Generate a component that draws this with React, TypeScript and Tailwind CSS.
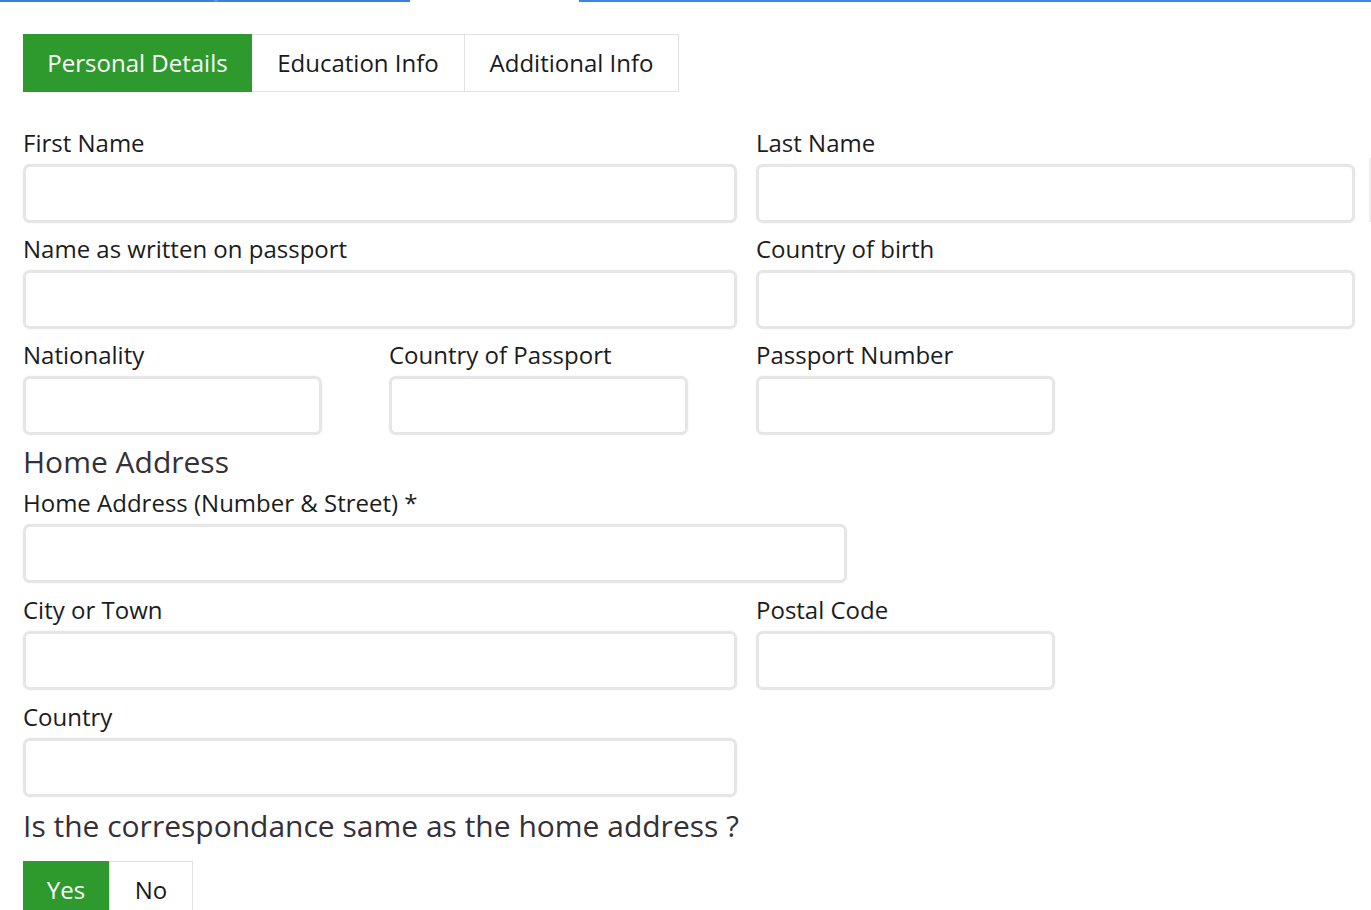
import React from "react";

const font = { fontFamily: '"Open Sans", "Noto Sans", sans-serif' };

function Field({ label, width }: { label: string; width: string }) {
  return (
    <div className="flex flex-col">
      <label className="h-[30px] leading-[30px] text-[24px] font-[380] text-[#1c1c1c] whitespace-nowrap mb-[6px]">{label}</label>
      <input
        className={`h-[59px] ${width} border-[3px] border-[#e6e6e6] rounded-[7px] bg-white shadow-[0_0_2px_rgba(0,0,0,0.08)] outline-none`}
      />
    </div>
  );
}

export default function App() {
  return (
    <div className="w-[1371px] h-[910px] bg-white overflow-hidden relative" style={font}>
      <div className="flex h-[2px]">
        <div className="w-[214px] bg-[#3a7fd8]" />
        <div className="w-[4px] bg-[#5a95e0]" />
        <div className="w-[192px] bg-[#3a7fd8]" />
        <div className="w-[169px]" />
        <div className="flex-1 bg-[#3a86e0]" />
      </div>
      <div className="absolute right-0 top-[158px] w-[2px] h-[64px] bg-[#f0f0f0]" />
      <div className="pl-[23px] pt-[32px]">
        <div className="flex h-[58px] text-[24px] font-[380]">
          <div className="w-[229px] bg-[#2e9a2e] text-white flex items-center justify-center border border-[#2e9a2e]">Personal Details</div>
          <div className="w-[212px] border-y border-[#e2e2e2] text-[#1a1a1a] flex items-center justify-center">Education Info</div>
          <div className="w-[215px] border border-[#e2e2e2] text-[#1a1a1a] flex items-center justify-center">Additional Info</div>
        </div>

        <div className="mt-[36px] flex gap-[19px]">
          <Field label="First Name" width="w-[714px]" />
          <Field label="Last Name" width="w-[599px]" />
        </div>
        <div className="mt-[11px] flex gap-[19px]">
          <Field label="Name as written on passport" width="w-[714px]" />
          <Field label="Country of birth" width="w-[599px]" />
        </div>
        <div className="mt-[11px] flex">
          <div className="w-[366px]"><Field label="Nationality" width="w-[299px]" /></div>
          <div className="w-[367px]"><Field label="Country of Passport" width="w-[299px]" /></div>
          <Field label="Passport Number" width="w-[299px]" />
        </div>

        <h3 className="mt-[9px] h-[36px] leading-[36px] text-[30px] font-[380] text-[#363036]">Home Address</h3>
        <div className="mt-[8px]">
          <Field label="Home Address (Number & Street) *" width="w-[824px]" />
        </div>
        <div className="mt-[12px] flex gap-[19px]">
          <Field label="City or Town" width="w-[714px]" />
          <Field label="Postal Code" width="w-[299px]" />
        </div>
        <div className="mt-[12px]">
          <Field label="Country" width="w-[714px]" />
        </div>

        <h3 className="mt-[11px] h-[36px] leading-[36px] text-[30px] font-[380] text-[#363036]">Is the correspondance same as the home address ?</h3>
        <div className="mt-[17px] flex h-[58px] text-[24px] font-[380]">
          <div className="w-[86px] bg-[#2e9a2e] text-white flex items-center justify-center">Yes</div>
          <div className="w-[84px] border border-[#e2e2e2] text-[#1a1a1a] flex items-center justify-center">No</div>
        </div>
      </div>
    </div>
  );
}
